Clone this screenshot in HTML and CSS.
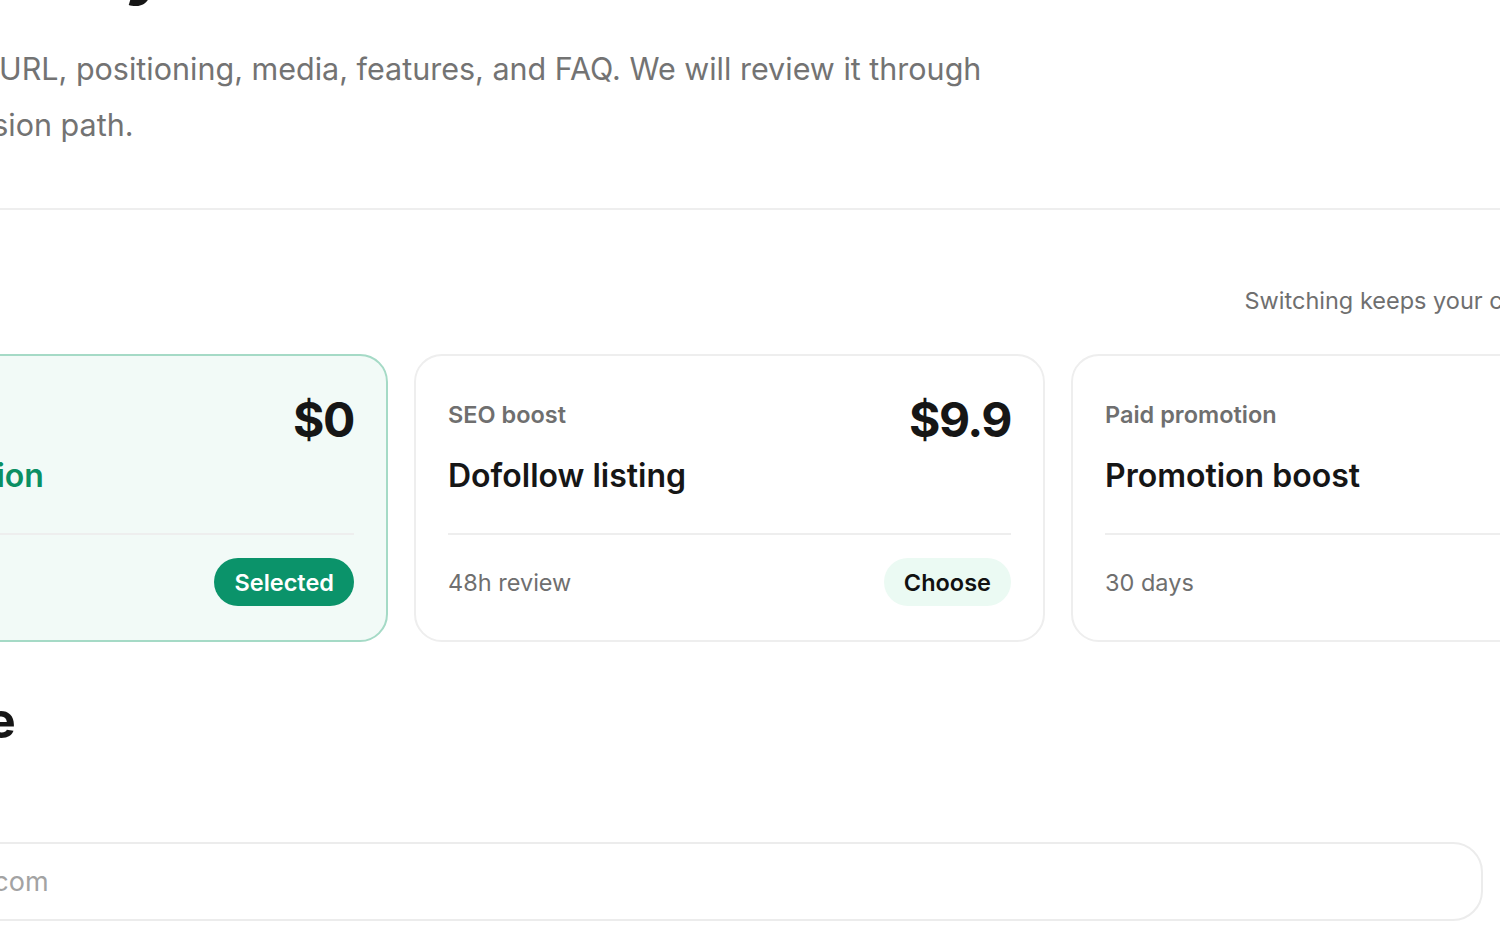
FILE: index.html
```html
<!DOCTYPE html>
<html lang="en">
<head>
    <meta charset="UTF-8" />
    <meta name="viewport" content="width=device-width, initial-scale=1.0" />
    <title>Submit your product</title>
    <link rel="stylesheet" href="styles.css">
</head>
<body>
    <main class="page">
        <header class="intro">
            <h1>Showcase your launch</h1>
            <p>Add the product URL, positioning, media, features, and FAQ. We will review it through<br>the main submission path.</p>
        </header>

        <div class="divider"></div>

        <section class="plans">
            <div class="plans-head">
                <h2>Plan</h2>
                <span class="plans-note">Switching keeps your current form fields.</span>
            </div>

            <div class="plan-grid">
                <div class="plan-card selected">
                    <div class="plan-top">
                        <span class="plan-label">Basic</span>
                        <span class="plan-price">$0</span>
                    </div>
                    <div class="plan-title">Free submission</div>
                    <div class="plan-foot">
                        <span class="plan-meta">7 days</span>
                        <button class="plan-btn">Selected</button>
                    </div>
                </div>

                <div class="plan-card">
                    <div class="plan-top">
                        <span class="plan-label">SEO boost</span>
                        <span class="plan-price">$9.9</span>
                    </div>
                    <div class="plan-title">Dofollow listing</div>
                    <div class="plan-foot">
                        <span class="plan-meta">48h review</span>
                        <button class="plan-btn">Choose</button>
                    </div>
                </div>

                <div class="plan-card">
                    <div class="plan-top">
                        <span class="plan-label">Paid promotion</span>
                        <span class="plan-price">$29</span>
                    </div>
                    <div class="plan-title">Promotion boost</div>
                    <div class="plan-foot">
                        <span class="plan-meta">30 days</span>
                        <button class="plan-btn">Choose</button>
                    </div>
                </div>
            </div>
        </section>

        <section class="form-section">
            <h2 class="form-title">Homepage</h2>
            <input class="url-input" type="text" placeholder="https://example.com" />
        </section>
    </main>
</body>
</html>
```

FILE: styles.css
```css
* {
    margin: 0;
    padding: 0;
    box-sizing: border-box;
}

body {
    font-family: Inter, 'Noto Sans', sans-serif;
    background: #ffffff;
    color: #161616;
    overflow: hidden;
    height: 938px;
}

.page {
    width: 1945px;
    margin-left: -243px;
}

.intro h1 {
    font-size: 72px;
    font-weight: 700;
    line-height: 80px;
    letter-spacing: -0.02em;
    margin-top: -75px;
}

.intro p {
    margin-top: 36px;
    font-size: 30.5px;
    line-height: 56px;
    color: #737373;
}

.divider {
    height: 2px;
    background: #eeeeee;
    margin-top: 55px;
}

.plans {
    margin-top: 70px;
}

.plans-head {
    display: flex;
    justify-content: space-between;
    align-items: baseline;
    margin-bottom: 37px;
}

.plans-head h2 {
    font-size: 30px;
    font-weight: 700;
}

.plans-note {
    font-size: 23.5px;
    line-height: 32px;
    color: #6f6f6f;
}

.plan-grid {
    display: grid;
    grid-template-columns: repeat(3, 631px);
    gap: 26px;
}

.plan-card {
    border: 2px solid #eeeeee;
    border-radius: 28px;
    padding: 32px 32px 34px;
    background: #ffffff;
}

.plan-card.selected {
    background: #f2faf7;
    border-color: #a5dac6;
}

.plan-top {
    display: flex;
    justify-content: space-between;
    align-items: flex-start;
}

.plan-label {
    padding-top: 11px;
    font-size: 23.5px;
    line-height: 32px;
    font-weight: 600;
    color: #6f6f6f;
}

.plan-price {
    margin-top: 4px;
    font-size: 48px;
    line-height: 56px;
    font-weight: 700;
    letter-spacing: -0.03em;
}

.plan-title {
    margin-top: 8px;
    font-size: 32px;
    line-height: 40px;
    font-weight: 600;
    padding-bottom: 37px;
    border-bottom: 2px solid #eeeeee;
}

.selected .plan-title {
    color: #0b8f63;
}

.plan-foot {
    display: flex;
    justify-content: space-between;
    align-items: center;
    margin-top: 23px;
}

.plan-meta {
    font-size: 23.5px;
    color: #6f6f6f;
}

.plan-btn {
    height: 48px;
    padding: 0 20px;
    border: none;
    border-radius: 24px;
    background: #ebfaf3;
    color: #111111;
    font-family: inherit;
    font-size: 23.5px;
    font-weight: 600;
    cursor: pointer;
}

.selected .plan-btn {
    background: #0b936a;
    color: #ffffff;
}

.form-section {
    max-width: 1726px;
    margin-top: 48px;
}

.form-title {
    font-size: 50px;
    line-height: 60px;
    font-weight: 700;
    letter-spacing: -0.02em;
    margin-bottom: 92px;
}

.url-input {
    display: block;
    width: 100%;
    height: 79px;
    padding: 0 28px;
    border: 2px solid #ececec;
    border-radius: 30px;
    font-family: inherit;
    font-size: 27px;
    color: #161616;
    outline: none;
}

.url-input::placeholder {
    color: #a3a3a3;
}
```
